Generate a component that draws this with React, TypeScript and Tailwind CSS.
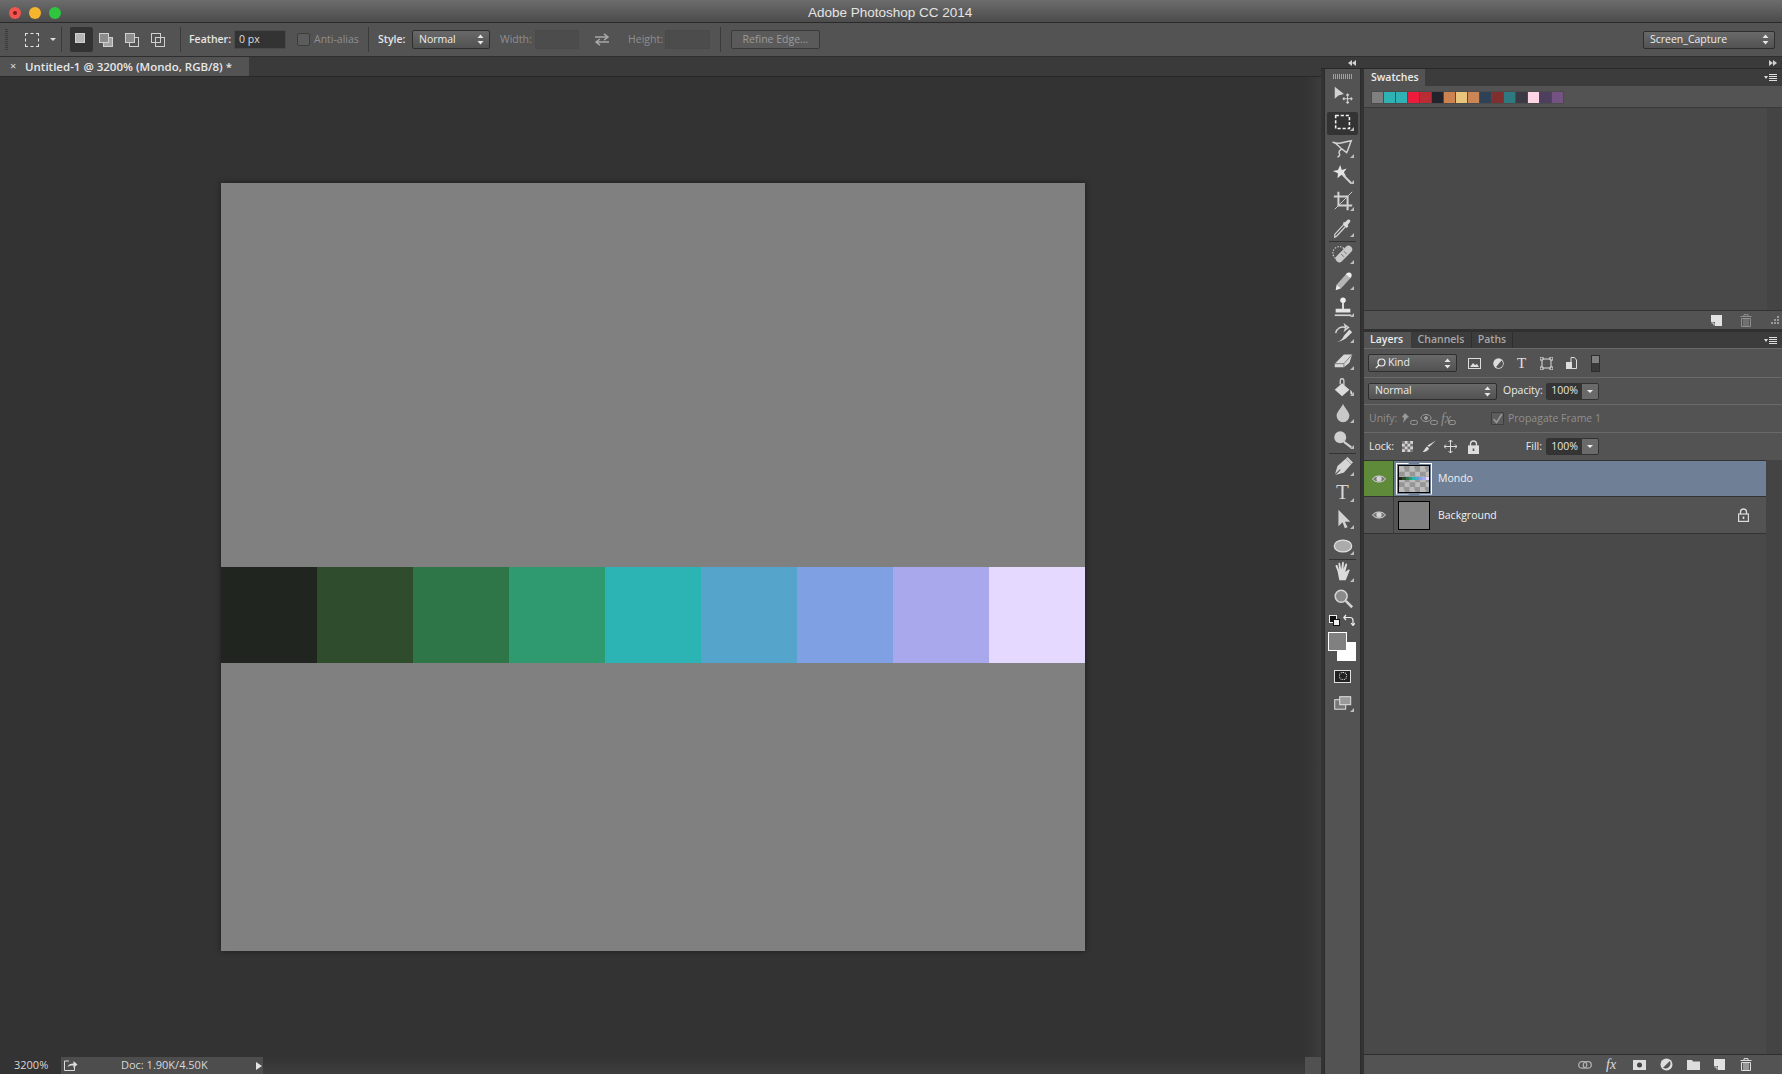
// Photoshop CC 2014 window: options bar, document area, tools column, swatches + layers dock
import type { FC, ReactNode } from "react";

const STRIP = ["#20261f", "#2f4c2d", "#2e7547", "#2f9a70", "#2cb4b5", "#54a4cc", "#7fa1e4", "#a9a8ec", "#e6d9ff"];
const SWATCHES = ["#808080", "#2fb2b4", "#2fb2b4", "#ee1c3c", "#b92c33", "#23232b", "#cc8350", "#e8c47c", "#cc8655", "#2d4256", "#7f2f2e", "#2f7a80", "#3a3a45", "#fdd5e4", "#4e3f5e", "#745382"];

const Svg: FC<{ s?: number; children: ReactNode }> = ({ s = 22, children }) => (
  <svg width={s} height={s} viewBox="0 0 24 24" fill="none" stroke="#d2d2d2" strokeWidth="1.6" className="shrink-0">{children}</svg>
);

const UpDown = () => (
  <svg width="7" height="11" viewBox="0 0 7 11" className="shrink-0"><path d="M3.5 0.5 6.5 4H.5zM3.5 10.5 .5 7h6z" fill="#e6e6e6" /></svg>
);

const Select: FC<{ label: string; cls: string; children?: ReactNode }> = ({ label, cls, children }) => (
  <div className={`flex items-center justify-between rounded-[2px] border border-[#2e2e2e] bg-gradient-to-b from-[#696969] to-[#525252] pl-[6px] pr-[5px] text-[10.5px] text-[#ececec] ${cls}`}>
    <span className="flex items-center gap-[2px]">{children}{label}</span><UpDown />
  </div>
);

const Sep: FC<{ cls?: string }> = ({ cls = "h-[25px]" }) => <div className={`w-px bg-[#3a3a3a] ${cls}`} />;

const ModeIcon: FC<{ a: string; b?: string }> = ({ a, b }) => (
  <svg width="14" height="14" viewBox="0 0 14 14" className="shrink-0">
    {b && <rect x="4.5" y="4.5" width="9" height="9" fill={b === "fill" ? "#a5a5a5" : "none"} stroke="#d0d0d0" />}
    <rect x="0.5" y="0.5" width="9" height="9" fill={a} stroke="#d0d0d0" />
  </svg>
);

// tool row: 26.5px pitch, the separators do not take any height
const Tool: FC<{ children: ReactNode; sel?: boolean; more?: boolean; line?: boolean }> = ({ children, sel, more = true, line }) => (
  <div className="relative flex h-[26.5px] shrink-0 items-center justify-center">
    {sel && <div className="absolute inset-x-[2px] top-[3px] bottom-0 rounded-[2px] bg-[#333333]" />}
    <div className="relative">{children}</div>
    {more && <div className="absolute right-[6px] bottom-[4px] h-0 w-0 border-b-[4px] border-l-[4px] border-b-[#bdbdbd] border-l-transparent" />}
    {line && <div className="absolute inset-x-[4px] bottom-[-1px] h-px bg-[#333333]" />}
  </div>
);

const Tools = () => (
  <div className="flex w-[37px] shrink-0 flex-col border-x border-[#2c2c2c] bg-[#535353]">
    <div className="flex h-[13px] shrink-0 items-center justify-center pt-[1px]"><div className="h-[5px] w-[20px] bg-[repeating-linear-gradient(90deg,#a0a0a0_0_1px,transparent_1px_2px)]" /></div>
    <Tool more={false}><Svg><path d="M3 3v13l4-3.5L13 11z" fill="#d2d2d2" stroke="none" /><path d="M17 11v10M12 16h10M15.5 12.5 17 11l1.500 1.500M15.500 19.500 17 21l1.500-1.500M13.500 14.500 12 16l1.500 1.500M20.500 14.500 22 16l-1.500 1.500" strokeWidth="1.100" /></Svg></Tool>
    <Tool sel><Svg><rect x="4" y="5" width="15" height="14" strokeDasharray="3.500 2" strokeWidth="1.700" stroke="#f0f0f0" /></Svg></Tool>
    <Tool><Svg><path d="M2 6c5 3 12-1 19-2-2 5-3 9-5 13-3-2-7-5-13-11zM11 13c-2 1-4 3-3 5 1 1 0 3-2 4" /></Svg></Tool>
    <Tool><Svg><path d="M9 1l1.700 5.500L16 5l-3 4 2.500 5L10 12l-4 3.500.5-5.500L1 7.500l5.500-1z" fill="#e4e4e4" stroke="none" /><path d="M12 12l9 9" strokeWidth="2.200" /></Svg></Tool>
    <Tool><Svg><path d="M7 2v15h15M2 7h15v15" strokeWidth="2.200" /><path d="M22 2 3 21" strokeWidth="1" /></Svg></Tool>
    <Tool line><Svg><path d="M3 22l2-1 10-11-2-2-10 11z" strokeWidth="1.400" /><path d="M12 8l4 4 2-2-1-1 3-4a2 2 0 0 0-3-2l-3 3-1-1z" fill="#dcdcdc" stroke="none" /></Svg></Tool>
    <Tool><Svg><circle cx="8" cy="11" r="7" strokeDasharray="1.500 1.500" strokeWidth="1.300" /><path d="M8 17 18 7" strokeWidth="8" strokeLinecap="round" stroke="#c8c8c8" /><path d="M10 12l3 3M13 9l3 3" strokeWidth="1" stroke="#666" /></Svg></Tool>
    <Tool><Svg><path d="M5 16 15 5l5 4-10 11z" fill="#b5b5b5" stroke="none" /><path d="M15 5c1-2 3-3 5-2s2 4 0 6z" fill="#efefef" stroke="none" /><path d="M5 16l5 4-6 2z" fill="#efefef" stroke="none" /></Svg></Tool>
    <Tool><Svg><circle cx="12" cy="4.500" r="3" fill="#efefef" stroke="none" /><path d="M11 7h2v7h-2zM4 14h16v4H4z" fill="#e4e4e4" stroke="none" /><path d="M3 21h18" strokeWidth="1.800" /></Svg></Tool>
    <Tool><Svg><path d="M4 11c1-5 6-8 11-6M15 5l-1-3 4 3-4 3z" strokeWidth="1.500" /><path d="M3 21c4 0 8-2 10-7l6-7 3 3-7 7c-3 2-7 4-12 4z" fill="#dcdcdc" stroke="none" /></Svg></Tool>
    <Tool><Svg><path d="M3 16 13 6h9l-3 9-6 5H3z" fill="#d8d8d8" stroke="none" /><path d="M3 16h10l9-10M13 16l0 4" stroke="#777" strokeWidth="1" /></Svg></Tool>
    <Tool><Svg><path d="M9 9V5a2 2 0 0 1 4 0v5" strokeWidth="1.400" /><path d="M3 15l8-7 8 7-8 7z" fill="#dcdcdc" stroke="none" /><path d="M20 15c2 2 3 4 2 5s-2 0-2-2z" fill="#dcdcdc" stroke="none" /></Svg></Tool>
    <Tool><Svg><path d="M12 2c2 5 7 9 7 13a7 7 0 0 1-14 0c0-4 5-8 7-13z" fill="#c8c8c8" stroke="none" /></Svg></Tool>
    <Tool line><Svg><circle cx="9" cy="9" r="6.500" fill="#cfcfcf" stroke="none" /><path d="M13 14l8 6" strokeWidth="2.500" /></Svg></Tool>
    <Tool><Svg><path d="M3 22l3-10 9-8 6 6-8 9z" fill="#d6d6d6" stroke="none" /><path d="M3 22l6-6" stroke="#555" strokeWidth="1.300" /><path d="M16 3l6 6" strokeWidth="2.600" /></Svg></Tool>
    <Tool><span className="font-['Liberation_Serif',serif] text-[21px] leading-none text-[#d6d6d6]">T</span></Tool>
    <Tool><Svg><path d="M7 2v18l4.500-4.500L14 22l3-1-3-6h6z" fill="#d2d2d2" stroke="none" /></Svg></Tool>
    <Tool line><Svg><ellipse cx="12" cy="12" rx="9.500" ry="6.500" fill="#ababab" stroke="#e0e0e0" strokeWidth="1.400" /></Svg></Tool>
    <Tool><Svg><path d="M6 11 4 6c-.5-1.500 1.500-2 2-1l2 5-1-7c0-1.500 2-1.500 2 0l1 6 1-7c.3-1.500 2-1.300 2 0l-.5 7 2-5.500c.5-1.300 2.300-1 2 .5l-2 8 3-2.500c1-.8 2.500.3 1.500 1.500L15 21H8z" fill="#dcdcdc" stroke="none" /></Svg></Tool>
    <Tool more={false}><Svg><circle cx="10" cy="9" r="6.500" fill="#8a8a8a" stroke="#d6d6d6" strokeWidth="1.600" /><path d="M15 14l7 7" strokeWidth="2.800" /></Svg></Tool>
    <div className="flex h-[16px] shrink-0 items-center justify-between pl-[4px] pr-[5px]">
      <svg width="11" height="11" viewBox="0 0 11 11"><rect x=".5" y=".5" width="7" height="7" fill="#111" stroke="#eee" /><rect x="4.500" y="4.500" width="6" height="6" fill="#eee" stroke="#111" /></svg>
      <svg width="12" height="12" viewBox="0 0 12 12" fill="none" stroke="#eee" strokeWidth="1.200"><path d="M1 3.500h6a3 3 0 0 1 3 3V11M3 1 .8 3.500 3 6M8 9l2 2.500L12 9" /></svg>
    </div>
    <div className="relative mt-[4px] h-[29px] w-full shrink-0">
      <div className="absolute top-[10px] left-[12px] h-[19px] w-[19px] bg-white" />
      <div className="absolute top-0 left-[3px] h-[19px] w-[19px] border border-white bg-[#808080]" />
    </div>
    <div className="mt-[5px] flex h-[20px] shrink-0 items-center justify-center">
      <div className="flex h-[13px] w-[17px] items-center justify-center border border-[#e0e0e0] bg-[#222]"><div className="h-[8px] w-[8px] rounded-full border border-dotted border-white" /></div>
    </div>
    <div className="relative mt-[4px] flex h-[26px] shrink-0 items-center justify-center">
      <svg width="18" height="14" viewBox="0 0 18 14"><rect x=".7" y="3.700" width="11" height="9.500" fill="#777" stroke="#e0e0e0" /><rect x="5.700" y=".7" width="11" height="8" fill="#9a9a9a" stroke="#e0e0e0" /></svg>
      <div className="absolute right-[6px] bottom-[4px] h-0 w-0 border-b-[4px] border-l-[4px] border-b-[#bdbdbd] border-l-transparent" />
    </div>
  </div>
);

const TabMenu = () => (
  <div className="ml-auto flex items-center gap-[1px] pr-[5px]">
    <div className="h-0 w-0 border-x-[2.500px] border-t-[3px] border-x-transparent border-t-[#ddd]" />
    <div className="flex w-[8px] flex-col gap-[1px]">{[0, 1, 2, 3].map((i) => <div key={i} className="h-px bg-[#ddd]" />)}</div>
  </div>
);

const Row: FC<{ cls: string; children: ReactNode }> = ({ cls, children }) => (
  <div className={`flex shrink-0 items-center border-t border-[#6a6a6a] bg-[#535353] ${cls}`}>{children}</div>
);

const Spin: FC<{ cls?: string }> = ({ cls = "" }) => (
  <div className={`flex h-[17px] overflow-hidden rounded-[2px] border border-[#333] ${cls}`}>
    <div className="flex w-[35px] items-center justify-center bg-[#343434] text-[10.5px] text-[#e6e6e6]">100%</div>
    <div className="flex w-[16px] items-center justify-center bg-[#6a6a6a]"><div className="h-0 w-0 border-x-[3px] border-t-[3px] border-x-transparent border-t-[#eee]" /></div>
  </div>
);

const Eye = () => (
  <svg width="14" height="10" viewBox="0 0 14 10"><path d="M.5 5C3 1 11 1 13.500 5 11 9 3 9 .5 5z" fill="#777" stroke="#d5d5d5" /><circle cx="7" cy="4.800" r="2.600" fill="#d5d5d5" /></svg>
);

const Padlock: FC<{ filled?: boolean }> = ({ filled }) => (
  <svg width="11" height="14" viewBox="0 0 11 14"><path d="M2.500 6V4a3 3 0 0 1 6 0v2" fill="none" stroke="#ddd" strokeWidth="1.300" /><rect x=".6" y="6" width="9.800" height="7.400" fill={filled ? "#ddd" : "none"} stroke="#ddd" strokeWidth="1.200" /><rect x="4.700" y="8.500" width="1.600" height="2.500" fill={filled ? "#555" : "#ddd"} /></svg>
);

const Trash: FC<{ c?: string }> = ({ c = "#ddd" }) => (
  <svg width="12" height="13" viewBox="0 0 12 13" fill="none" stroke={c}><path d="M4 2V.6h4V2M.5 2.500h11" /><path d="M1.500 4.500h9V12.500h-9zM4 5v7M6 5v7M8 5v7" /></svg>
);

const NewDoc = () => (
  <svg width="11" height="11" viewBox="0 0 11 11"><path d="M0 0h11v11H4V7H0z" fill="#e2e2e2" /><path d="M.5 8 3 8 3 10.500" fill="none" stroke="#e2e2e2" /></svg>
);

const Link = () => (
  <svg width="8" height="5" viewBox="0 0 8 5" fill="none" stroke="#999" className="mt-[7px] -ml-[3px]"><rect x=".5" y=".5" width="7" height="4" rx="2" /></svg>
);

const Layer: FC<{ name: string; active?: boolean; children: ReactNode; right?: ReactNode; cls: string }> = ({ name, active, children, right, cls }) => (
  <div className={`flex shrink-0 items-stretch border-b border-[#333] ${cls} ${active ? "bg-[#6e7f96]" : "bg-[#535353]"}`}>
    <div className={`flex w-[30px] items-center justify-center border-r border-[#3c3c3c] ${active ? "bg-[#5f8a3a]" : "bg-[#535353]"}`}><Eye /></div>
    <div className="flex w-[38px] shrink-0 items-center pl-[2px]">{children}</div>
    <div className="self-center pl-[6px] pt-[1px] text-[10.5px] text-[#f0f0f0]">{name}</div>
    {right && <div className="ml-auto flex items-center pr-[17px]">{right}</div>}
  </div>
);

export default function App() {
  return (
    <div className="flex h-[1074px] w-[1782px] flex-col overflow-hidden bg-[#333333] font-['Open_Sans',sans-serif]">
      {/* titre */}
      <div className="flex h-[23px] shrink-0 items-center border-b border-[#2a2a2a] bg-gradient-to-b from-[#6c6c6c] to-[#4c4c4c] pt-[3px]">
        <div className="flex items-center gap-[8px] pl-[9px]">
          <div className="flex h-[12px] w-[12px] items-center justify-center rounded-full bg-[#f2544f]"><div className="h-[4px] w-[4px] rounded-full bg-[#7e1c18]" /></div>
          <div className="h-[12px] w-[12px] rounded-full bg-[#f5b52d]" />
          <div className="h-[12px] w-[12px] rounded-full bg-[#2fc53f]" />
        </div>
        <div className="ml-[747px] pt-[1px] font-['Liberation_Sans',sans-serif] text-[13.5px] text-[#e4e4e4]">Adobe Photoshop CC 2014</div>
      </div>

      {/* options */}
      <div className="flex h-[34px] shrink-0 items-center border-b border-[#2e2e2e] bg-[#535353] text-[10.5px] whitespace-nowrap">
        <div className="ml-[5px] h-[22px] w-[3px] bg-[repeating-linear-gradient(180deg,#3a3a3a_0_1px,transparent_1px_2px)]" />
        <div className="ml-[17px] h-[14px] w-[14px] border border-dashed border-[#e6e6e6]" />
        <div className="ml-[11px] h-0 w-0 border-x-[3px] border-t-[3px] border-x-transparent border-t-[#ddd]" />
        <div className="ml-[5px]"><Sep /></div>
        <div className="ml-[8px] flex h-[25px] w-[23px] items-center justify-center rounded-[2px] bg-[#333]"><ModeIcon a="#b5b5b5" /></div>
        <div className="ml-[6px]"><ModeIcon a="#8c8c8c" b="fill" /></div>
        <div className="ml-[12px]"><ModeIcon a="#8c8c8c" b="none" /></div>
        <div className="ml-[12px]"><ModeIcon a="none" b="none" /></div>
        <div className="ml-[15px]"><Sep /></div>
        <span className="ml-[8px] w-[39px] font-semibold text-[#e6e6e6]">Feather:</span>
        <div className="ml-[6px] flex h-[19px] w-[52px] items-center border border-[#4a4a4a] bg-[#333] pl-[4px] text-[#ddd]">0 px</div>
        <div className="ml-[11px] h-[13px] w-[13px] rounded-[2px] border border-[#3c3c3c] bg-[#5c5c5c]" />
        <span className="ml-[4px] w-[46px] text-[#8f8f8f]">Anti-alias</span>
        <div className="ml-[8px]"><Sep /></div>
        <span className="ml-[9px] w-[26px] font-semibold text-[#e6e6e6]">Style:</span>
        <Select label="Normal" cls="ml-[8px] h-[19px] w-[78px]" />
        <span className="ml-[10px] w-[32px] text-[#8f8f8f]">Width:</span>
        <div className="ml-[3px] h-[19px] w-[44px] border border-[#4a4a4a] bg-[#4c4c4c]" />
        <svg width="16" height="13" viewBox="0 0 16 13" className="ml-[15px]" fill="none" stroke="#a8a8a8" strokeWidth="1.500"><path d="M1 4h12M10 .8 14 4l-4 3.200M15 9H3M6 6 2 9l4 3.200" /></svg>
        <span className="ml-[18px] w-[35px] text-[#8f8f8f]">Height:</span>
        <div className="ml-[2px] h-[19px] w-[45px] border border-[#4a4a4a] bg-[#4c4c4c]" />
        <div className="ml-[10px]"><Sep /></div>
        <div className="ml-[10px] flex h-[19px] w-[89px] items-center justify-center rounded-[2px] border border-[#3a3a3a] bg-[#5a5a5a] text-[#9a9a9a]">Refine Edge...</div>
        <Select label="Screen_Capture" cls="ml-auto mr-[7px] h-[18px] w-[132px]" />
      </div>

      <div className="flex min-h-0 flex-1">
        {/* document */}
        <div className="flex w-[1321px] shrink-0 flex-col">
          <div className="flex h-[20px] shrink-0 border-b border-[#282828] bg-[#3a3a3a]">
            <div className="flex w-[249px] items-center bg-[#535353] text-[11.5px] font-semibold whitespace-nowrap text-[#e8e8e8]">
              <span className="w-[25px] pl-[10px] text-[11px] font-normal text-[#ddd]">×</span>Untitled-1 @ 3200% (Mondo, RGB/8) *
            </div>
          </div>
          <div className="flex min-h-0 flex-1">
            <div className="flex-1 pl-[221px] pt-[106px]">
              <div className="flex h-[768px] w-[864px] flex-col bg-[#808080] shadow-[0_0_6px_rgba(0,0,0,0.45)]">
                <div className="h-[384px]" />
                <div className="flex h-[96px]">{STRIP.map((c) => <div key={c} className="w-[96px]" style={{ backgroundColor: c }} />)}</div>
              </div>
            </div>
            <div className="w-[16px] bg-gradient-to-r from-[#333333] to-[#3c3c3c]" />
          </div>
          <div className="flex h-[17px] shrink-0 items-center text-[11px] text-[#d8d8d8]">
            <span className="w-[61px] pl-[14px]">3200%</span>
            <div className="flex h-full w-[202px] items-center bg-[#4d4d4d]">
              <svg width="14" height="11" viewBox="0 0 14 11" className="ml-[3px]" fill="none" stroke="#ddd"><path d="M5 1H.5v9.500h10V7" /><path d="M3.500 7c1-3 3-3.500 6-3.500V1L13.500 4.500 9.500 8V5.500C7 5.500 5 5.500 3.500 7z" fill="#ddd" stroke="none" /></svg>
              <span className="ml-[43px]">Doc: 1.90K/4.50K</span>
              <div className="ml-auto mr-[1px] h-0 w-0 border-y-[4.500px] border-l-[6px] border-y-transparent border-l-[#e4e4e4]" />
            </div>
            <div className="h-full flex-1 bg-gradient-to-b from-[#333333] to-[#3e3e3e]" />
            <div className="h-full w-[16px] bg-[#515151]" />
          </div>
        </div>

        <div className="flex min-w-0 flex-1 flex-col bg-[#3a3a3a]">
          {/* bandeau de repli */}
          <div className="flex h-[12px] shrink-0 items-center border-b border-[#282828]">
            <div className="ml-[27px] flex"><div className="h-0 w-0 border-y-[3px] border-r-[4px] border-y-transparent border-r-[#d0d0d0]" /><div className="h-0 w-0 border-y-[3px] border-r-[4px] border-y-transparent border-r-[#d0d0d0]" /></div>
            <div className="ml-auto mr-[5px] flex"><div className="h-0 w-0 border-y-[3px] border-l-[4px] border-y-transparent border-l-[#d0d0d0]" /><div className="h-0 w-0 border-y-[3px] border-l-[4px] border-y-transparent border-l-[#d0d0d0]" /></div>
          </div>
          <div className="flex min-h-0 flex-1">
            <div className="w-[3px] shrink-0 bg-[#333]" />
            <Tools />
            <div className="w-[3px] shrink-0 bg-[#333]" />

            {/* dock */}
            <div className="flex min-w-0 flex-1 flex-col">
              <div className="flex h-[17px] shrink-0 items-stretch bg-[#3c3c3c] text-[10.5px]">
                <div className="flex w-[61px] items-center bg-[#535353] pl-[7px] font-semibold text-[#ececec]">Swatches</div>
                <TabMenu />
              </div>
              <div className="flex h-[22px] shrink-0 items-center border-b border-[#3a3a3a] bg-[#535353] pl-[7px] pt-[1px]">
                <div className="flex gap-[1px] bg-[#4b4b4b] p-[1px]">
                  {SWATCHES.map((c, i) => <div key={i} className="h-[11px] w-[11px]" style={{ backgroundColor: c }} />)}
                </div>
              </div>
              <div className="flex h-[203px] shrink-0 border-b border-[#333] bg-[#494949]">
                <div className="flex-1" />
                <div className="w-[15px] bg-[#444444]" />
              </div>
              <div className="flex h-[21px] shrink-0 items-center justify-end border-b-[3px] border-[#303030] bg-[#535353] pr-[3px]">
                <div className="mr-[18px]"><NewDoc /></div>
                <div className="mr-[19px]"><Trash c="#8e8e8e" /></div>
                <svg width="8" height="8" viewBox="0 0 8 8" fill="#9a9a9a"><path d="M6 0h2v2H6zM3 3h2v2H3zM6 3h2v2H6zM0 6h2v2H0zM3 6h2v2H3zM6 6h2v2H6z" /></svg>
              </div>
              <div className="flex h-[16px] shrink-0 items-stretch bg-[#3c3c3c] text-[10.5px] font-semibold">
                <div className="flex w-[47px] items-center bg-[#535353] pl-[6px] text-[#ececec]">Layers</div>
                <div className="flex w-[61px] items-center justify-center border-r border-[#2e2e2e] text-[#a8a8a8]">Channels</div>
                <div className="flex w-[41px] items-center justify-center border-r border-[#2e2e2e] text-[#a8a8a8]">Paths</div>
                <TabMenu />
              </div>
              <Row cls="h-[29px] text-[10.5px]">
                <Select label="Kind" cls="ml-[4px] h-[18px] w-[89px]">
                  <svg width="11" height="11" viewBox="0 0 11 11" fill="none" stroke="#eee" strokeWidth="1.200"><circle cx="6.500" cy="4.500" r="3.500" /><path d="M4 7 .8 10.200" /></svg>
                </Select>
                <svg width="13" height="11" viewBox="0 0 13 11" className="ml-[11px]"><rect x=".5" y=".5" width="12" height="10" fill="none" stroke="#ddd" /><path d="M2 9l3-4 2 2 2-1 2 3z" fill="#ddd" /></svg>
                <svg width="11" height="11" viewBox="0 0 11 11" className="ml-[12px]"><circle cx="5.500" cy="5.500" r="5.200" fill="#ddd" /><path d="M8.500 2.500A4 4 0 0 1 3 9z" fill="#555" /></svg>
                <span className="ml-[13px] w-[11px] font-['Liberation_Serif',serif] text-[15px] leading-none text-[#e0e0e0]">T</span>
                <svg width="13" height="13" viewBox="0 0 13 13" className="ml-[12px]" fill="none" stroke="#ddd"><rect x="2" y="2" width="9" height="9" /><path d="M0 0h3v3H0zM10 0h3v3h-3zM0 10h3v3H0zM10 10h3v3h-3z" fill="#555" /></svg>
                <svg width="11" height="12" viewBox="0 0 11 12" className="ml-[13px]"><path d="M5 .5h3.500L10.500 3v8.500H5z" fill="none" stroke="#ddd" /><rect x="0" y="5" width="6" height="7" fill="#ddd" /></svg>
                <div className="ml-[14px] h-[17px] w-[9px] border border-[#2e2e2e] bg-gradient-to-b from-[#808080] from-50% to-[#3a3a3a] to-50%" />
              </Row>
              <Row cls="h-[27px] text-[10.5px]">
                <Select label="Normal" cls="ml-[4px] h-[17px] w-[129px]" />
                <span className="ml-[6px] text-[#ececec]">Opacity:</span>
                <Spin cls="ml-auto mr-[183px]" />
              </Row>
              <Row cls="h-[28px] text-[10.5px] text-[#8f8f8f]">
                <span className="ml-[5px] w-[27px]">Unify:</span>
                <span className="ml-[4px] flex w-[60px] items-center">
                  <svg width="13" height="13" viewBox="0 0 13 13"><path d="M5 1l4 4-2 1-4 5 1-5-2-1z" fill="#999" /></svg><Link />
                  <svg width="13" height="13" viewBox="0 0 13 13" fill="none" stroke="#999" className="ml-[2px]"><ellipse cx="6" cy="6" rx="5" ry="3.500" /><circle cx="6" cy="6" r="1.500" fill="#999" /></svg><Link />
                  <span className="ml-[3px] font-['Liberation_Serif',serif] text-[14px] italic leading-none">fx</span><Link />
                </span>
                <div className="ml-[31px] flex h-[13px] w-[13px] items-center justify-center rounded-[1px] border border-[#3f3f3f] bg-[#5c5c5c]">
                  <svg width="11" height="11" viewBox="0 0 11 11" fill="none" stroke="#9a9a9a" strokeWidth="1.500"><path d="M1.500 6 4.500 9.500 10 1" /></svg>
                </div>
                <span className="ml-[4px]">Propagate Frame 1</span>
              </Row>
              <Row cls="h-[28px] text-[10.5px] text-[#e8e8e8]">
                <span className="ml-[5px] w-[27px]">Lock:</span>
                <div className="ml-[6px] h-[11px] w-[11px] bg-[repeating-conic-gradient(#d5d5d5_0_25%,#777_0_50%)] bg-[length:5.5px_5.5px]" />
                <svg width="15" height="13" viewBox="0 0 15 13" className="ml-[9px]"><path d="M14 .5 7 7 5.500 5.500zM5 6.500 7 8.500C6 11 3 12.500 .5 12 2.500 11 3 7.500 5 6.500z" fill="#ddd" /></svg>
                <svg width="13" height="13" viewBox="0 0 13 13" className="ml-[7px]" fill="none" stroke="#ddd"><path d="M6.500 0v13M0 6.500h13M4.500 2l2-2 2 2M4.500 11l2 2 2-2M2 4.500l-2 2 2 2M11 4.500l2 2-2 2" /></svg>
                <div className="ml-[11px]"><Padlock filled /></div>
                <span className="ml-auto">Fill:</span>
                <Spin cls="ml-[4px] mr-[183px]" />
              </Row>
              <div className="flex min-h-0 flex-1">
                <div className="flex min-w-0 flex-1 flex-col border-t border-[#333] bg-[#494949]">
                  <Layer name="Mondo" active cls="h-[36px]">
                    <div className="relative h-[32px] w-[36px] p-[2px]">
                      <div className="absolute inset-0 border-[1.5px] border-white [clip-path:polygon(0_0,35%_0,35%_12%,65%_12%,65%_0,100%_0,100%_100%,65%_100%,65%_88%,35%_88%,35%_100%,0_100%)]" />
                      <div className="flex h-full w-full flex-col justify-center border border-black bg-[repeating-conic-gradient(#969696_0_25%,#bcbcbc_0_50%)] bg-[length:10.5px_10.5px]">
                        <div className="flex h-[3px]">{STRIP.map((c) => <div key={c} className="flex-1" style={{ backgroundColor: c }} />)}</div>
                      </div>
                    </div>
                  </Layer>
                  <Layer name="Background" cls="h-[37px]" right={<Padlock />}>
                    <div className="ml-[2px] h-[29px] w-[32px] border border-black bg-[#808080]" />
                  </Layer>
                </div>
                <div className="w-[16px] bg-[#444444]" />
              </div>
              <div className="flex h-[20px] shrink-0 items-center border-t border-[#2e2e2e] bg-[#535353] pl-[214px]">
                <svg width="14" height="8" viewBox="0 0 14 8" fill="none" stroke="#b0b0b0" strokeWidth="1.300"><rect x=".7" y=".7" width="8" height="6.500" rx="3.200" /><rect x="5.300" y=".7" width="8" height="6.500" rx="3.200" /></svg>
                <span className="ml-[14px] w-[15px] font-['Liberation_Serif',serif] text-[14px] italic leading-none text-[#ddd]">fx</span>
                <svg width="13" height="10" viewBox="0 0 13 10" className="ml-[12px]"><rect width="13" height="10" fill="#ddd" /><circle cx="6.500" cy="5" r="2.500" fill="#444" /></svg>
                <svg width="13" height="13" viewBox="0 0 13 13" className="ml-[14px]"><circle cx="6.500" cy="6.500" r="6" fill="#ddd" /><path d="M9.800 3A5 5 0 0 1 3 9.800z" fill="#555" /></svg>
                <svg width="13" height="10" viewBox="0 0 13 10" className="ml-[14px]"><path d="M0 0h5l1 1.500h7V10H0z" fill="#ddd" /></svg>
                <div className="ml-[14px]"><NewDoc /></div>
                <div className="ml-[15px]"><Trash /></div>
              </div>
            </div>
          </div>
        </div>
      </div>
    </div>
  );
}
